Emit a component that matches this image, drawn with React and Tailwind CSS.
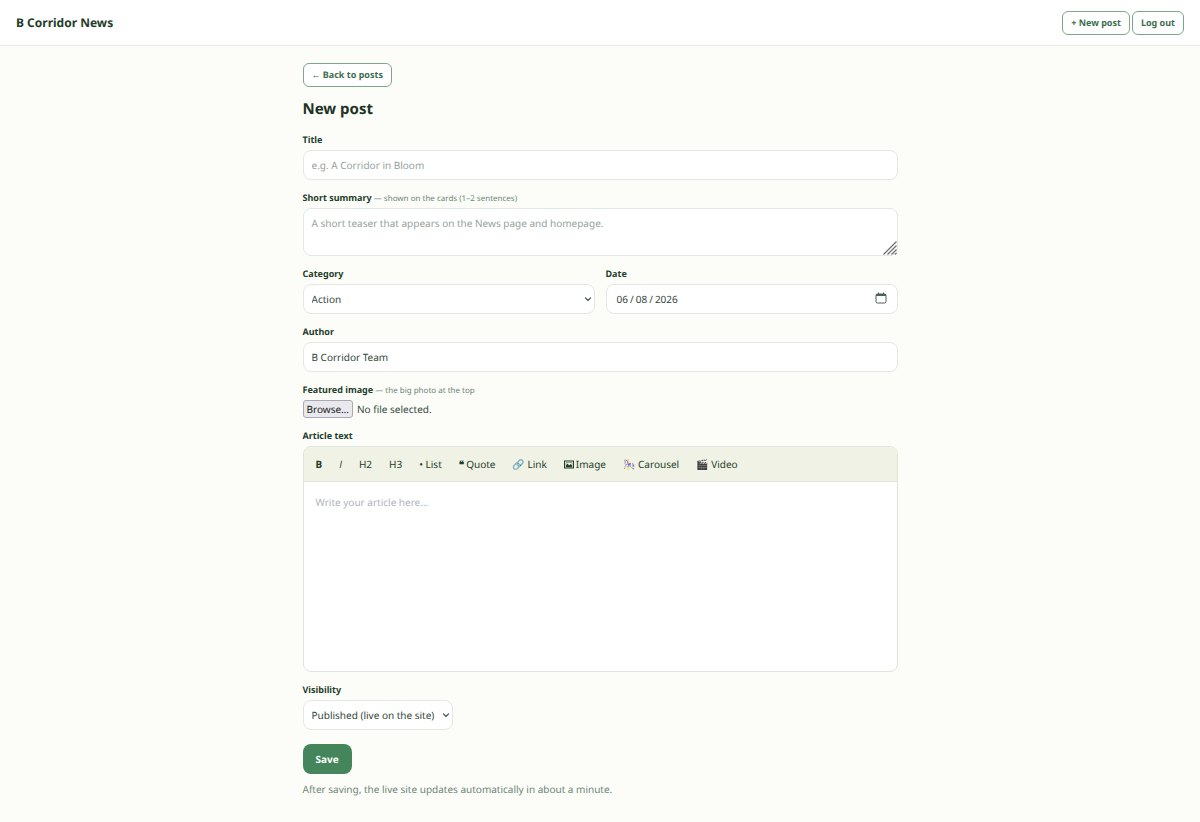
import React, { useState } from 'react';

const outlineButton =
  'block h-6 rounded-md border border-[#7fa68d] bg-white px-2 text-[9px] leading-4 font-bold text-[#3c6e4f]';
const field =
  'block h-[30px] w-full rounded-lg border border-[#e3e8e3] bg-white px-2 text-[10px] text-[#33473b] placeholder:text-[#96a29b]';

const tools = [
  { name: 'Bold', label: 'B', className: 'font-bold' },
  { name: 'Italic', label: 'I', className: "font-['Open_Sans',sans-serif] italic" },
  { name: 'Heading 2', label: 'H2' },
  { name: 'Heading 3', label: 'H3' },
  { name: 'List', label: '• List' },
  { name: 'Quote', mark: '❝', label: 'Quote' },
  { name: 'Link', label: '🔗 Link' },
  { name: 'Image', icon: true, label: 'Image' },
  { name: 'Carousel', label: '🎠 Carousel' },
  { name: 'Video', label: '🎬 Video' },
];

function FrameIcon() {
  return (
    <svg className="h-[9px] w-[10px]" viewBox="0 0 10 9" fill="none" stroke="currentColor">
      <rect x=".5" y="1" width="9" height="7" strokeWidth="1" />
      <path d="M2 7V5.500l1.500-2 1.500 2 1.500-1.500L8 5.500V7z" fill="currentColor" stroke="none" />
      <path d="M2 2.500h6V7H2z" strokeWidth=".4" />
    </svg>
  );
}

function Field({ id, label, hint, children }) {
  return (
    <div className="mb-[10px]">
      <label htmlFor={id} className="mb-[3px] block text-[9px] leading-[15px] font-bold text-[#1f3d2b]">
        {label}
        {hint && <span className="text-[8px] leading-none font-normal text-[#6f8577]"> — {hint}</span>}
      </label>
      {children}
    </div>
  );
}

function Select({ id, value, onChange, options }) {
  return (
    <div className="relative">
      <select id={id} value={value} onChange={onChange} className={`${field} appearance-none`}>
        {options.map((option) => (
          <option key={option}>{option}</option>
        ))}
      </select>
      <svg
        className="pointer-events-none absolute top-[11px] right-[3px] h-2 w-2 text-[#33473b]"
        viewBox="0 0 8 8"
        fill="none"
        stroke="currentColor"
        strokeWidth="1.2"
      >
        <path d="M1.2 2.6 4 5.4 6.8 2.6" />
      </svg>
    </div>
  );
}

function App() {
  const [title, setTitle] = useState('');
  const [summary, setSummary] = useState('');
  const [category, setCategory] = useState('Action');
  const [date, setDate] = useState('2026-06-08');
  const [author, setAuthor] = useState('B Corridor Team');
  const [fileName, setFileName] = useState('');
  const [body, setBody] = useState('');
  const [visibility, setVisibility] = useState('Published (live on the site)');

  return (
    <div className="min-h-screen bg-[#fcfdf8] font-['Noto_Sans',sans-serif] text-[10px] text-[#33473b] [text-rendering:geometricPrecision] [&_button]:[text-rendering:inherit] [&_input]:[text-rendering:inherit] [&_select]:[text-rendering:inherit] [&_textarea]:[text-rendering:inherit]">
      <header className="flex items-center justify-between border-b border-[#e8ece8] bg-white px-4 pt-[11px] pb-[10px]">
        <div className="text-[12px] leading-6 font-bold text-[#1f3d2b]">B Corridor News</div>
        <div className="flex gap-[2px]">
          <button type="button" className={outlineButton}>+ New post</button>
          <button type="button" className={outlineButton}>Log out</button>
        </div>
      </header>

      <main className="mx-auto max-w-[595px] pt-[17px] pb-6">
        <button type="button" className={outlineButton}>← Back to posts</button>
        <h1 className="mt-[10px] mb-[11px] text-[15px] leading-6 font-bold text-[#1c3326]">New post</h1>

        <form onSubmit={(e) => e.preventDefault()}>
          <Field id="title" label="Title">
            <input
              id="title"
              type="text"
              className={field}
              placeholder="e.g. A Corridor in Bloom"
              value={title}
              onChange={(e) => setTitle(e.target.value)}
            />
          </Field>

          <Field id="summary" label="Short summary" hint="shown on the cards (1–2 sentences)">
            <div className="relative">
              <textarea
                id="summary"
                className="block h-12 w-full resize-none rounded-lg border border-[#e3e8e3] bg-white px-2 py-[6px] text-[10px] leading-4 placeholder:text-[#96a29b]"
                placeholder="A short teaser that appears on the News page and homepage."
                value={summary}
                onChange={(e) => setSummary(e.target.value)}
              />
              {/* resize grip */}
              <svg
                className="pointer-events-none absolute right-px bottom-px h-[14px] w-[14px]"
                viewBox="0 0 14 14"
                stroke="#6b6b6b"
                strokeWidth="1.2"
              >
                <path d="M.5 13.5l13-13M4.5 13.5l9-9M8.5 13.5l5-5M12 13.5l1.500-1.500" />
              </svg>
            </div>
          </Field>

          <div className="grid grid-cols-2 gap-[11px]">
            <Field id="category" label="Category">
              <Select
                id="category"
                value={category}
                onChange={(e) => setCategory(e.target.value)}
                options={['Action', 'News', 'Events']}
              />
            </Field>
            <Field id="date" label="Date">
              <div className="relative">
                <input
                  id="date"
                  type="date"
                  className={`${field} [&::-webkit-calendar-picker-indicator]:opacity-0 [&::-webkit-datetime-edit-text]:px-px [&::-webkit-datetime-edit]:pl-px`}
                  value={date}
                  onChange={(e) => setDate(e.target.value)}
                />
                <svg
                  className="pointer-events-none absolute top-2 right-[11px] h-3 w-3 text-[#4c6054]"
                  viewBox="0 0 12 12"
                  fill="none"
                  stroke="currentColor"
                >
                  <rect x="1" y="2" width="10" height="9" rx="1.500" />
                  <path d="M1 3h10" strokeWidth="2" />
                  <path d="M3.500.5v2M8.500.5v2" />
                </svg>
              </div>
            </Field>
          </div>

          <Field id="author" label="Author">
            <input
              id="author"
              type="text"
              className={field}
              value={author}
              onChange={(e) => setAuthor(e.target.value)}
            />
          </Field>

          <Field id="image" label="Featured image" hint="the big photo at the top">
            <input
              id="image"
              type="file"
              accept="image/*"
              className="sr-only"
              onChange={(e) => setFileName(e.target.files[0]?.name || '')}
            />
            <label htmlFor="image" className="flex items-center gap-1 leading-4">
              <span className="rounded-[3px] border border-[#a9a9b3] bg-[#e9e9ed] px-[3px] text-[#222]">Browse…</span>
              <span>{fileName || 'No file selected.'}</span>
            </label>
          </Field>

          <Field id="body" label="Article text">
            <div className="overflow-hidden rounded-lg border border-[#dfe5dc] bg-white">
              <div className="flex h-[35px] items-center gap-px border-b border-[#dfe5dc] bg-[#f0f2e5] px-1">
                {tools.map((tool) => (
                  <button
                    key={tool.name}
                    type="button"
                    title={tool.name}
                    className={`flex items-center gap-[2px] px-2 text-[10px] leading-4 text-[#1f3d2b] ${tool.className || ''}`}
                  >
                    {tool.icon && <FrameIcon />}
                    {tool.mark && <span className="font-bold">{tool.mark}</span>}
                    {tool.label}
                  </button>
                ))}
              </div>
              <textarea
                id="body"
                className="block h-[189px] w-full resize-none px-3 py-3 text-[10px] leading-4 placeholder:text-[#b0b3bd]"
                placeholder="Write your article here..."
                value={body}
                onChange={(e) => setBody(e.target.value)}
              />
            </div>
          </Field>

          <div className="w-[150px]">
            <Field id="visibility" label="Visibility">
              <Select
                id="visibility"
                value={visibility}
                onChange={(e) => setVisibility(e.target.value)}
                options={['Published (live on the site)', 'Draft (hidden)']}
              />
            </Field>
          </div>

          <button
            type="submit"
            className="mt-[14px] block h-[30px] rounded-lg bg-[#44855b] px-[13px] text-[10px] font-bold text-white"
          >
            Save
          </button>
          <p className="mt-[6px] leading-[18px] text-[#6f8577]">
            After saving, the live site updates automatically in about a minute.
          </p>
        </form>
      </main>
    </div>
  );
}

export default App;
